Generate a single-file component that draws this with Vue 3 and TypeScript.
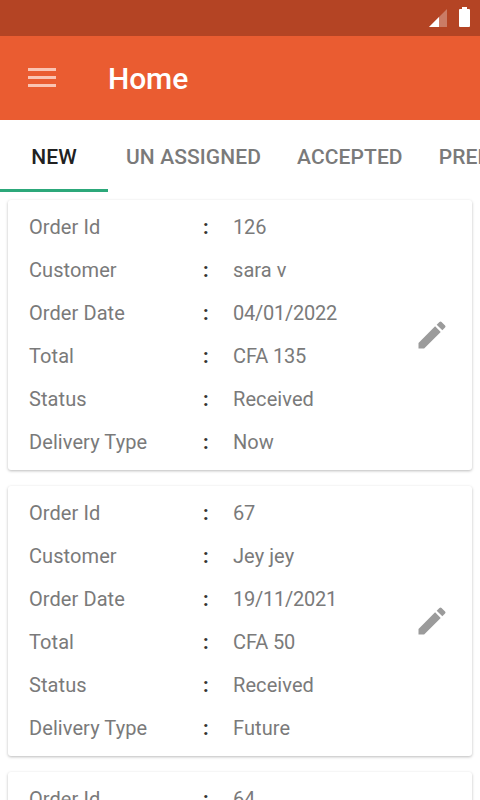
<script setup lang="ts">
interface Order { id: string; customer: string; date: string; total: string; status: string; delivery: string }

const tabs: string[] = ['NEW', 'UN ASSIGNED', 'ACCEPTED', 'PREPARED']
const orders: Order[] = [
  { id: '126', customer: 'sara v', date: '04/01/2022', total: 'CFA 135', status: 'Received', delivery: 'Now' },
  { id: '67', customer: 'Jey jey', date: '19/11/2021', total: 'CFA 50', status: 'Received', delivery: 'Future' },
  { id: '64', customer: '', date: '', total: '', status: '', delivery: '' },
]
const fields: { key: keyof Order; label: string }[] = [
  { key: 'id', label: 'Order Id' },
  { key: 'customer', label: 'Customer' },
  { key: 'date', label: 'Order Date' },
  { key: 'total', label: 'Total' },
  { key: 'status', label: 'Status' },
  { key: 'delivery', label: 'Delivery Type' },
]
</script>

<template>
  <div class="screen">
    <div class="status-bar">
      <svg class="signal" width="18" height="18" viewBox="0 0 18 18">
        <path d="M18 0V18H0Z" fill="#fff" fill-opacity=".3" />
        <path d="M10 8V18H0Z" fill="#fff" />
      </svg>
      <svg class="battery" width="11" height="20" viewBox="0 0 11 20">
        <path d="M3 0h5v2H10a1 1 0 0 1 1 1V19a1 1 0 0 1-1 1H1a1 1 0 0 1-1-1V3a1 1 0 0 1 1-1h2z" fill="#fff" />
      </svg>
    </div>
    <header class="bar">
      <div class="menu"><i></i><i></i><i></i></div>
      <h1>Home</h1>
    </header>
    <nav class="tabs">
      <div v-for="(t, i) in tabs" :key="t" class="tab" :class="{ active: i === 0 }">{{ t }}</div>
    </nav>
    <main class="list">
      <section v-for="o in orders" :key="o.id" class="card">
        <div class="rows">
          <div v-for="f in fields" :key="f.key" class="row">
            <span class="label">{{ f.label }}</span>
            <span class="colon">:</span>
            <span class="value" :class="`value-${f.key}`">{{ o[f.key] }}</span>
          </div>
        </div>
        <svg class="edit" width="36" height="36" viewBox="0 0 24 24">
          <path fill="#9b9b9b" d="M3 17.25V21h3.75L17.81 9.94l-3.75-3.75L3 17.25zM20.71 7.04a1 1 0 0 0 0-1.41l-2.34-2.34a1 1 0 0 0-1.41 0l-1.83 1.83 3.75 3.75 1.83-1.83z" />
        </svg>
      </section>
    </main>
  </div>
</template>

<style>
body { margin: 0; overflow: hidden; }
</style>
<style scoped>
.screen { width: 480px; height: 800px; overflow: hidden; background: #fff; font-family: Roboto, sans-serif; display: flex; flex-direction: column; }
.status-bar { flex: none; height: 36px; box-sizing: border-box; background: #b44424; display: flex; justify-content: flex-end; padding: 7px 10px 0 0; }
.signal { margin: 2px 12px 0 0; }
.bar { flex: none; height: 84px; background: #ea5c31; display: flex; align-items: center; padding-left: 28px; }
.menu { width: 28px; display: flex; flex-direction: column; gap: 5px; margin-bottom: 1px; }
.menu i { height: 3px; background: #fac4b3; }
h1 { margin: 2px 0 0 52px; font-size: 30px; font-weight: 500; line-height: 36px; letter-spacing: -.1px; color: #fff; }
.tabs { flex: none; height: 72px; display: flex; }
.tab { flex: none; box-sizing: border-box; height: 72px; padding: 0 18px; line-height: 74px; font-size: 21px; font-weight: 500; letter-spacing: .1px; color: #7a7a7a; white-space: nowrap; }
.tab.active { width: 108px; padding: 0; text-align: center; color: #212121; border-bottom: 3px solid #2ca87a; }
.list { padding: 8px; display: flex; flex-direction: column; gap: 16px; }
.card { flex: none; height: 270px; box-sizing: border-box; display: flex; justify-content: space-between; align-items: center; padding: 0 22px 0 21px; border-radius: 3px; background: #fff; box-shadow: 0 1px 3px rgba(0,0,0,.27); }
.rows { align-self: flex-start; padding-top: 5px; }
.row { height: 43px; display: flex; align-items: center; font-size: 20px; letter-spacing: .08px; color: #7a7a7a; }
.label { width: 174px; }
.colon { width: 30px; color: #333; font-weight: 700; }
.value-date { letter-spacing: -.25px; }
.value-total, .value-id { letter-spacing: -.13px; }
</style>
